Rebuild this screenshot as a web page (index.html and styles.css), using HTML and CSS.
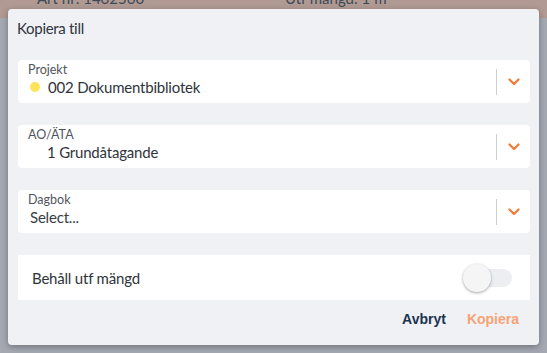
FILE: index.html
```html
<!DOCTYPE html>
<html lang="sv">
<head>
    <meta charset="UTF-8">
    <meta name="viewport" content="width=device-width, initial-scale=1.0">
    <title>Kopiera till</title>
    <link rel="stylesheet" href="styles.css">
</head>
<body>
    <div class="topbar">
        <div class="topbar-row">
            <span class="art">Art nr: 1462560</span>
            <span class="amount">Utf mängd: 1 m</span>
        </div>
    </div>

    <div class="dialog">
        <h1 class="dialog-title">Kopiera till</h1>

        <div class="field">
            <div class="field-body">
                <div class="field-label">Projekt</div>
                <div class="field-value"><span class="dot"></span>002 Dokumentbibliotek</div>
            </div>
            <div class="field-sep"></div>
            <div class="field-arrow">
                <svg width="12" height="8" viewBox="0 0 12 8"><path d="M1.5 1.5 L6 6 L10.5 1.5" fill="none" stroke="#f47a36" stroke-width="2.2" stroke-linecap="round" stroke-linejoin="round"/></svg>
            </div>
        </div>

        <div class="field">
            <div class="field-body">
                <div class="field-label">AO/ÄTA</div>
                <div class="field-value indent">1 Grundåtagande</div>
            </div>
            <div class="field-sep"></div>
            <div class="field-arrow">
                <svg width="12" height="8" viewBox="0 0 12 8"><path d="M1.5 1.5 L6 6 L10.5 1.5" fill="none" stroke="#f47a36" stroke-width="2.2" stroke-linecap="round" stroke-linejoin="round"/></svg>
            </div>
        </div>

        <div class="field">
            <div class="field-body">
                <div class="field-label">Dagbok</div>
                <div class="field-value placeholder">Select...</div>
            </div>
            <div class="field-sep"></div>
            <div class="field-arrow">
                <svg width="12" height="8" viewBox="0 0 12 8"><path d="M1.5 1.5 L6 6 L10.5 1.5" fill="none" stroke="#f47a36" stroke-width="2.2" stroke-linecap="round" stroke-linejoin="round"/></svg>
            </div>
        </div>

        <div class="toggle-row">
            <span class="toggle-label">Behåll utf mängd</span>
            <span class="toggle">
                <span class="toggle-knob"></span>
            </span>
        </div>

        <div class="actions">
            <button class="btn btn-cancel">Avbryt</button>
            <button class="btn btn-ok">Kopiera</button>
        </div>
    </div>
</body>
</html>
```

FILE: styles.css
```css
* {
    margin: 0;
    padding: 0;
    box-sizing: border-box;
}

body {
    font-family: Lato, Inter, 'Noto Sans', sans-serif;
    background: #a4a8b1;
    width: 547px;
    height: 353px;
    overflow: hidden;
    position: relative;
}

.topbar {
    height: 18px;
    background: #b09a93;
    overflow: hidden;
}

.topbar-row {
    display: flex;
    margin-top: -11px;
    font-size: 15px;
    line-height: 18px;
    color: #3d4a58;
}

.art {
    margin-left: 37px;
    width: 248px;
}

/* dialog sits over the page */
.dialog {
    position: absolute;
    left: 8px;
    top: 9px;
    width: 531px;
    height: 336px;
    background: #f0f1f5;
    border-radius: 4px;
    box-shadow: 0 2px 6px rgba(0,0,0,0.3);
    padding: 9px 9px 0 10px;
}

.dialog-title {
    font-size: 15px;
    font-weight: 400;
    line-height: 20px;
    letter-spacing: -0.3px;
    color: #2e3440;
    margin-left: -1px;
    margin-bottom: 22px;
}

.field {
    display: flex;
    align-items: center;
    height: 43px;
    background: #fff;
    border-radius: 4px;
    margin-bottom: 22px;
}

.field-body {
    flex: 1;
    padding: 2px 0 2px 10px;
    align-self: flex-start;
}

.field-label {
    font-size: 12.5px;
    line-height: 15px;
    color: #50555d;
}

.field-value {
    font-size: 15px;
    line-height: 20px;
    letter-spacing: -0.2px;
    color: #2f343c;
    display: flex;
    align-items: center;
}

.field-value.indent {
    padding-left: 19px;
}

.field-value.placeholder {
    padding-left: 2px;
    color: #363c46;
}

.dot {
    width: 10px;
    height: 10px;
    border-radius: 50%;
    background: #fde35a;
    margin: 0 8px 0 2px;
}

.field-sep {
    width: 1px;
    height: 26px;
    background: #cfcfd2;
}

.field-arrow {
    width: 33px;
    display: flex;
    justify-content: center;
    padding-left: 1px;
}

.toggle-row {
    display: flex;
    align-items: center;
    justify-content: space-between;
    height: 45px;
    background: #fff;
    padding: 0 18px 0 14px;
}

.toggle-label {
    font-size: 15px;
    letter-spacing: -0.2px;
    color: #2f343c;
}

.toggle {
    position: relative;
    width: 47px;
    height: 18px;
    border-radius: 9px;
    background: #eceef2;
}

.toggle-knob {
    position: absolute;
    left: -2px;
    top: -5px;
    width: 28px;
    height: 28px;
    border-radius: 50%;
    background: #f5f5f6;
    box-shadow: 0 1px 3px rgba(0,0,0,0.35);
}

.actions {
    display: flex;
    justify-content: flex-end;
    gap: 21px;
    padding: 9px 11px 0 0;
}

.btn {
    background: none;
    border: none;
    font-family: 'Liberation Sans', Arial, sans-serif;
    font-weight: 700;
    font-size: 14px;
    line-height: 20px;
    cursor: pointer;
}

.btn-cancel {
    color: #1b3450;
}

.btn-ok {
    color: #f7a274;
}
```
